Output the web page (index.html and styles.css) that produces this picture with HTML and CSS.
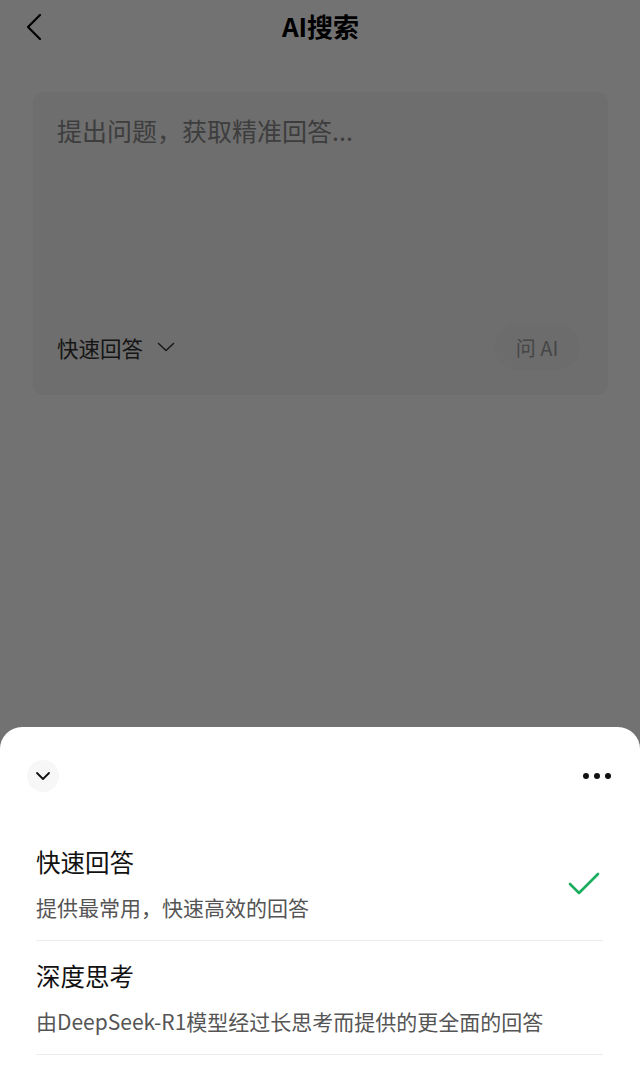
FILE: index.html
```html
<!DOCTYPE html>
<html lang="zh-CN">
<head>
<meta charset="utf-8">
<title>AI搜索</title>
<link rel="stylesheet" href="styles.css">
</head>
<body>
<div class="page">
  <header class="nav">
    <button class="back" aria-label="返回">
      <svg width="18" height="28" viewBox="0 0 18 28"><path d="M15 2 L3 14 L15 26" fill="none" stroke="#000" stroke-width="2.2" stroke-linecap="round" stroke-linejoin="round"/></svg>
    </button>
    <h1 class="title">AI搜索</h1>
  </header>
  <section class="card">
    <div class="placeholder">提出问题，获取精准回答...</div>
    <div class="card-foot">
      <div class="mode">快速回答
        <svg width="18" height="10" viewBox="0 0 18 10"><path d="M1.5 1.5 L9 8.5 L16.5 1.5" fill="none" stroke="#3a3a3a" stroke-width="1.6" stroke-linecap="round" stroke-linejoin="round"/></svg>
      </div>
      <button class="ask">问 AI</button>
    </div>
  </section>
</div>
<div class="mask"></div>
<div class="sheet">
  <div class="sheet-head">
    <button class="collapse" aria-label="收起">
      <svg width="16" height="10" viewBox="0 0 16 10"><path d="M2 2 L8 8 L14 2" fill="none" stroke="#111" stroke-width="1.8" stroke-linecap="round" stroke-linejoin="round"/></svg>
    </button>
    <button class="more" aria-label="更多"><span></span><span></span><span></span></button>
  </div>
  <ul class="options">
    <li class="option">
      <div class="opt-text">
        <div class="opt-title">快速回答</div>
        <div class="opt-desc">提供最常用，快速高效的回答</div>
      </div>
      <svg class="check" width="32" height="24" viewBox="0 0 32 24"><path d="M2 12 L11 21 L30 2" fill="none" stroke="#1aad5e" stroke-width="2.6" stroke-linecap="round" stroke-linejoin="round"/></svg>
    </li>
    <li class="option">
      <div class="opt-text">
        <div class="opt-title">深度思考</div>
        <div class="opt-desc">由DeepSeek-R1模型经过长思考而提供的更全面的回答</div>
      </div>
    </li>
  </ul>
</div>
</body>
</html>
```
FILE: styles.css
```css
* { box-sizing: border-box; }
html, body { margin: 0; padding: 0; }
body {
  width: 640px;
  height: 1080px;
  overflow: hidden;
  position: relative;
  background: #ffffff;
  font-family: "PingFang SC", "Noto Sans CJK SC", "Noto Sans", sans-serif;
  color: #111;
}
button { font-family: inherit; border: 0; background: none; padding: 0; cursor: pointer; }
.page { padding: 0 32px 0 33px; }
.nav {
  height: 56px;
  display: flex;
  align-items: center;
  justify-content: center;
  position: relative;
}
.back {
  position: absolute;
  left: -8px;
  top: 12px;
  width: 20px;
  height: 30px;
  display: flex;
  align-items: center;
}
.title {
  margin: 0 0 4px;
  font-size: 26px;
  font-weight: 700;
  color: #000;
  line-height: 1;
}
.card {
  margin-top: 36px;
  height: 303px;
  background: #f6f6f6;
  border-radius: 10px;
  padding: 22px 28px 25px 24px;
  display: flex;
  flex-direction: column;
  justify-content: space-between;
}
.placeholder {
  font-size: 25px;
  color: #8a8a8a;
  line-height: 32px;
}
.card-foot {
  display: flex;
  align-items: center;
  justify-content: space-between;
}
.mode {
  display: flex;
  align-items: center;
  gap: 14px;
  font-size: 21.5px;
  color: #333;
}
.ask {
  width: 86px;
  height: 46px;
  border-radius: 23px;
  background: #f2f2f2;
  color: #9c9c9c;
  font-size: 20px;
}
.mask {
  position: absolute;
  inset: 0;
  background: rgba(0, 0, 0, 0.553);
}
.sheet {
  position: absolute;
  left: 0;
  right: 0;
  top: 727px;
  bottom: 0;
  background: #fff;
  border-radius: 22px 22px 0 0;
  padding: 34px 29px 0 27px;
}
.sheet-head {
  display: flex;
  align-items: center;
  justify-content: space-between;
  height: 30px;
}
.collapse {
  width: 32px;
  height: 32px;
  border-radius: 50%;
  background: #f7f7f7;
  display: flex;
  align-items: center;
  justify-content: center;
}
.more {
  display: flex;
  gap: 5px;
  align-items: center;
  padding-right: 0;
}
.more span {
  width: 6px;
  height: 6px;
  border-radius: 50%;
  background: #111;
}
.options {
  list-style: none;
  margin: 55px 8px 0 9px;
  padding: 0;
}
.option {
  display: flex;
  align-items: center;
  justify-content: space-between;
  border-bottom: 1px solid #ececec;
  padding: 0 0 19px;
  margin-bottom: 19px;
}
.opt-title {
  font-size: 24.5px;
  color: #111;
  line-height: 32px;
}
.opt-desc {
  margin-top: 15px;
  font-size: 21px;
  color: #555;
  line-height: 28px;
}
.check { margin-right: 3px; }
```
